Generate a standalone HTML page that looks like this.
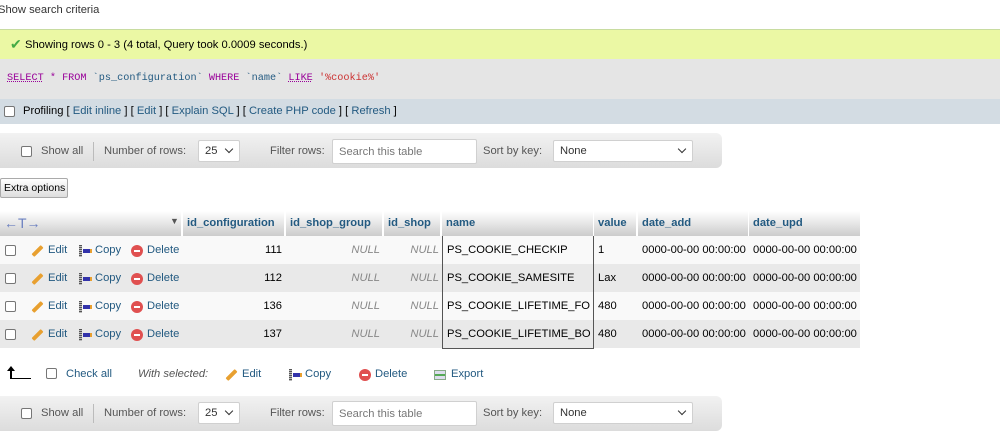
<!DOCTYPE html>
<html><head><style>
*{margin:0;padding:0;box-sizing:border-box}
body{width:1000px;height:425px;overflow:hidden;background:#fff;font-family:"Liberation Sans",Arial,sans-serif;font-size:11.2px;color:#333;position:relative}
.a{position:absolute;white-space:nowrap}
.lnk{color:#235a81}
.cb{position:absolute;width:11px;height:11px;border:1px solid #767676;border-radius:2px;background:#fff}
.nav{position:absolute;left:0;width:722px;height:35px;background:linear-gradient(#f2f2f2,#dcdcdc);border-radius:0 6px 6px 0}
.sel{position:absolute;height:22px;background:#fff;border:1px solid #d0d0d0;border-radius:2px;padding:4px 6px}
.chev{position:absolute;right:7px;top:5px;width:6px;height:6px;border-right:1.5px solid #333;border-bottom:1.5px solid #333;transform:rotate(45deg)}
.th{position:absolute;top:211px;height:25px;background:linear-gradient(#fff,#ccc);font-weight:bold;color:#235a81;padding:6px 4px}
.row{position:absolute;left:0;width:860px;height:28px}
.num{text-align:right}
.null{color:#888;font-style:italic}
.pen{position:absolute;width:13px;height:4px;background:#e8a030;transform:rotate(-45deg);border-radius:1px}
.del{position:absolute;width:12px;height:12px;border-radius:50%;background:#e05050}
.del:after{content:"";position:absolute;left:3px;top:5px;width:6px;height:2px;background:#fff}
.cp{position:absolute;width:12px;height:12px}
.cp:before{content:"";position:absolute;left:1px;top:0;width:3px;height:12px;background:repeating-linear-gradient(#555 0 1px,#bbb 1px 2px)}
.cp:after{content:"";position:absolute;left:5px;top:4px;width:7px;height:4px;background:#33a;border-right:2px solid #e8a030}
</style></head><body>
<div class="a" style="left:-2px;top:4px">Show search criteria</div>
<div class="a" style="left:0;top:29px;width:1000px;height:30px;background:#ebf8a4;border-top:1px solid #c8dca0"></div>
<div class="a" style="left:10px;top:38px;color:#4a4;font-size:14px;line-height:12px">✔</div>
<div class="a" style="left:25px;top:39px;color:#000">Showing rows 0 - 3 (4 total, Query took 0.0009 seconds.)</div>
<div class="a" style="left:0;top:59px;width:1000px;height:40px;background:#e5e5e5"></div>
<div class="a" style="left:7px;top:73px;font-family:'Liberation Mono',monospace;font-size:10.2px;color:#444"><span style="color:#909;text-decoration:underline dotted">SELECT</span> <span style="color:#909">*</span> <span style="color:#909">FROM</span> <span style="color:#235a81">`ps_configuration`</span> <span style="color:#909">WHERE</span> <span style="color:#235a81">`name`</span> <span style="color:#909;text-decoration:underline dotted">LIKE</span> <span style="color:#c33">'%cookie%'</span></div>
<div class="a" style="left:0;top:99px;width:1000px;height:25px;background:#d3dce3"></div>
<div class="cb" style="left:4px;top:106px"></div>
<div class="a" style="left:23px;top:105px;color:#000">Profiling [ <span class="lnk">Edit inline</span> ] [ <span class="lnk">Edit</span> ] [ <span class="lnk">Explain SQL</span> ] [ <span class="lnk">Create PHP code</span> ] [ <span class="lnk">Refresh</span> ]</div>

<div class="nav" style="top:133px"></div>
<div class="cb" style="left:21px;top:146px"></div>
<div class="a" style="left:41px;top:145px;color:#555">Show all</div>
<div class="a" style="left:93px;top:142px;width:1px;height:19px;background:#bbb"></div>
<div class="a" style="left:104px;top:145px;color:#555">Number of rows:</div>
<div class="sel" style="left:198px;top:140px;width:42px">25<span class="chev"></span></div>
<div class="a" style="left:270px;top:145px;color:#555">Filter rows:</div>
<div class="sel" style="left:332px;top:139px;width:145px;height:25px;color:#777;padding-top:6px">Search this table</div>
<div class="a" style="left:483px;top:145px;color:#555">Sort by key:</div>
<div class="sel" style="left:553px;top:140px;width:140px">None<span class="chev"></span></div>

<div class="a" style="left:0;top:178px;width:68px;height:20px;background:linear-gradient(#fff,#ddd);border:1px solid #aaa;border-radius:2px;font-size:10.5px;padding:3px 3px;color:#000">Extra options</div>

<div class="th" style="left:0;width:181px"><span style="color:#6a7fc0;font-weight:normal;position:relative;top:-2px;font-size:14px">←T→</span><span style="position:absolute;left:170px;top:5px;font-size:9px;color:#555">▼</span></div>
<div class="th" style="left:183px;width:101px">id_configuration</div>
<div class="th" style="left:286px;width:96px">id_shop_group</div>
<div class="th" style="left:384px;width:56px">id_shop</div>
<div class="th" style="left:442px;width:151px">name</div>
<div class="th" style="left:594px;width:42px">value</div>
<div class="th" style="left:638px;width:110px">date_add</div>
<div class="th" style="left:749px;width:111px">date_upd</div>

<div class="row" style="top:236px;background:#f9f9f9"></div>
<div class="row" style="top:264px;background:#e9e9e9"></div>
<div class="row" style="top:292px;background:#f9f9f9"></div>
<div class="row" style="top:320px;background:#e9e9e9"></div>
<div class="a" style="left:442px;top:236px;width:152px;height:113px;border:1px solid #555;border-top:none"></div>

<div id="rows"></div>
<script>
var d=[["111","PS_COOKIE_CHECKIP","1"],["112","PS_COOKIE_SAMESITE","Lax"],["136","PS_COOKIE_LIFETIME_FO","480"],["137","PS_COOKIE_LIFETIME_BO","480"]];
var h="";
d.forEach(function(r,i){var y=236+i*28,t=y+8;
h+='<div class="cb" style="left:5px;top:'+(t+1)+'px"></div>';
h+='<div class="pen" style="left:31px;top:'+(t+5)+'px"></div><div class="a lnk" style="left:48px;top:'+t+'px">Edit</div>';
h+='<div class="cp" style="left:78px;top:'+(t+1)+'px"></div><div class="a lnk" style="left:95px;top:'+t+'px">Copy</div>';
h+='<div class="del" style="left:131px;top:'+(t+1)+'px"></div><div class="a lnk" style="left:147px;top:'+t+'px">Delete</div>';
h+='<div class="a num" style="left:183px;width:99px;top:'+t+'px;color:#000">'+r[0]+'</div>';
h+='<div class="a num null" style="left:286px;width:94px;top:'+t+'px">NULL</div>';
h+='<div class="a num null" style="left:384px;width:55px;top:'+t+'px">NULL</div>';
h+='<div class="a" style="left:447px;top:'+t+'px;color:#000">'+r[1]+'</div>';
h+='<div class="a" style="left:598px;top:'+t+'px;color:#000">'+r[2]+'</div>';
h+='<div class="a" style="left:642px;top:'+t+'px;color:#000">0000-00-00 00:00:00</div>';
h+='<div class="a" style="left:753px;top:'+t+'px;color:#000">0000-00-00 00:00:00</div>';});
document.getElementById("rows").innerHTML=h;
</script>

<div class="a" style="left:10px;top:368px;width:2px;height:11px;background:#000"></div>
<div class="a" style="left:7px;top:366px;width:0;height:0;border-left:4px solid transparent;border-right:4px solid transparent;border-bottom:5px solid #000"></div>
<div class="a" style="left:10px;top:378px;width:21px;height:1px;background:#000"></div>
<div class="cb" style="left:46px;top:368px"></div>
<div class="a lnk" style="left:66px;top:368px">Check all</div>
<div class="a" style="left:138px;top:368px;font-style:italic;color:#555">With selected:</div>
<div class="pen" style="left:225px;top:373px"></div><div class="a lnk" style="left:242px;top:368px">Edit</div>
<div class="cp" style="left:288px;top:369px"></div><div class="a lnk" style="left:305px;top:368px">Copy</div>
<div class="del" style="left:359px;top:369px"></div><div class="a lnk" style="left:375px;top:368px">Delete</div>
<div class="a" style="left:434px;top:370px;width:12px;height:10px;border:1px solid #8a8;background:linear-gradient(#dde 0 40%,#5a5 40% 60%,#dde 60%)"></div>
<div class="a lnk" style="left:451px;top:368px">Export</div>

<div class="nav" style="top:396px;height:35px"></div>
<div class="cb" style="left:21px;top:408px"></div>
<div class="a" style="left:41px;top:407px;color:#555">Show all</div>
<div class="a" style="left:93px;top:404px;width:1px;height:19px;background:#bbb"></div>
<div class="a" style="left:104px;top:407px;color:#555">Number of rows:</div>
<div class="sel" style="left:198px;top:402px;width:42px">25<span class="chev"></span></div>
<div class="a" style="left:270px;top:407px;color:#555">Filter rows:</div>
<div class="sel" style="left:332px;top:401px;width:145px;height:25px;color:#777;padding-top:6px">Search this table</div>
<div class="a" style="left:483px;top:407px;color:#555">Sort by key:</div>
<div class="sel" style="left:553px;top:402px;width:140px">None<span class="chev"></span></div>
</body></html>
